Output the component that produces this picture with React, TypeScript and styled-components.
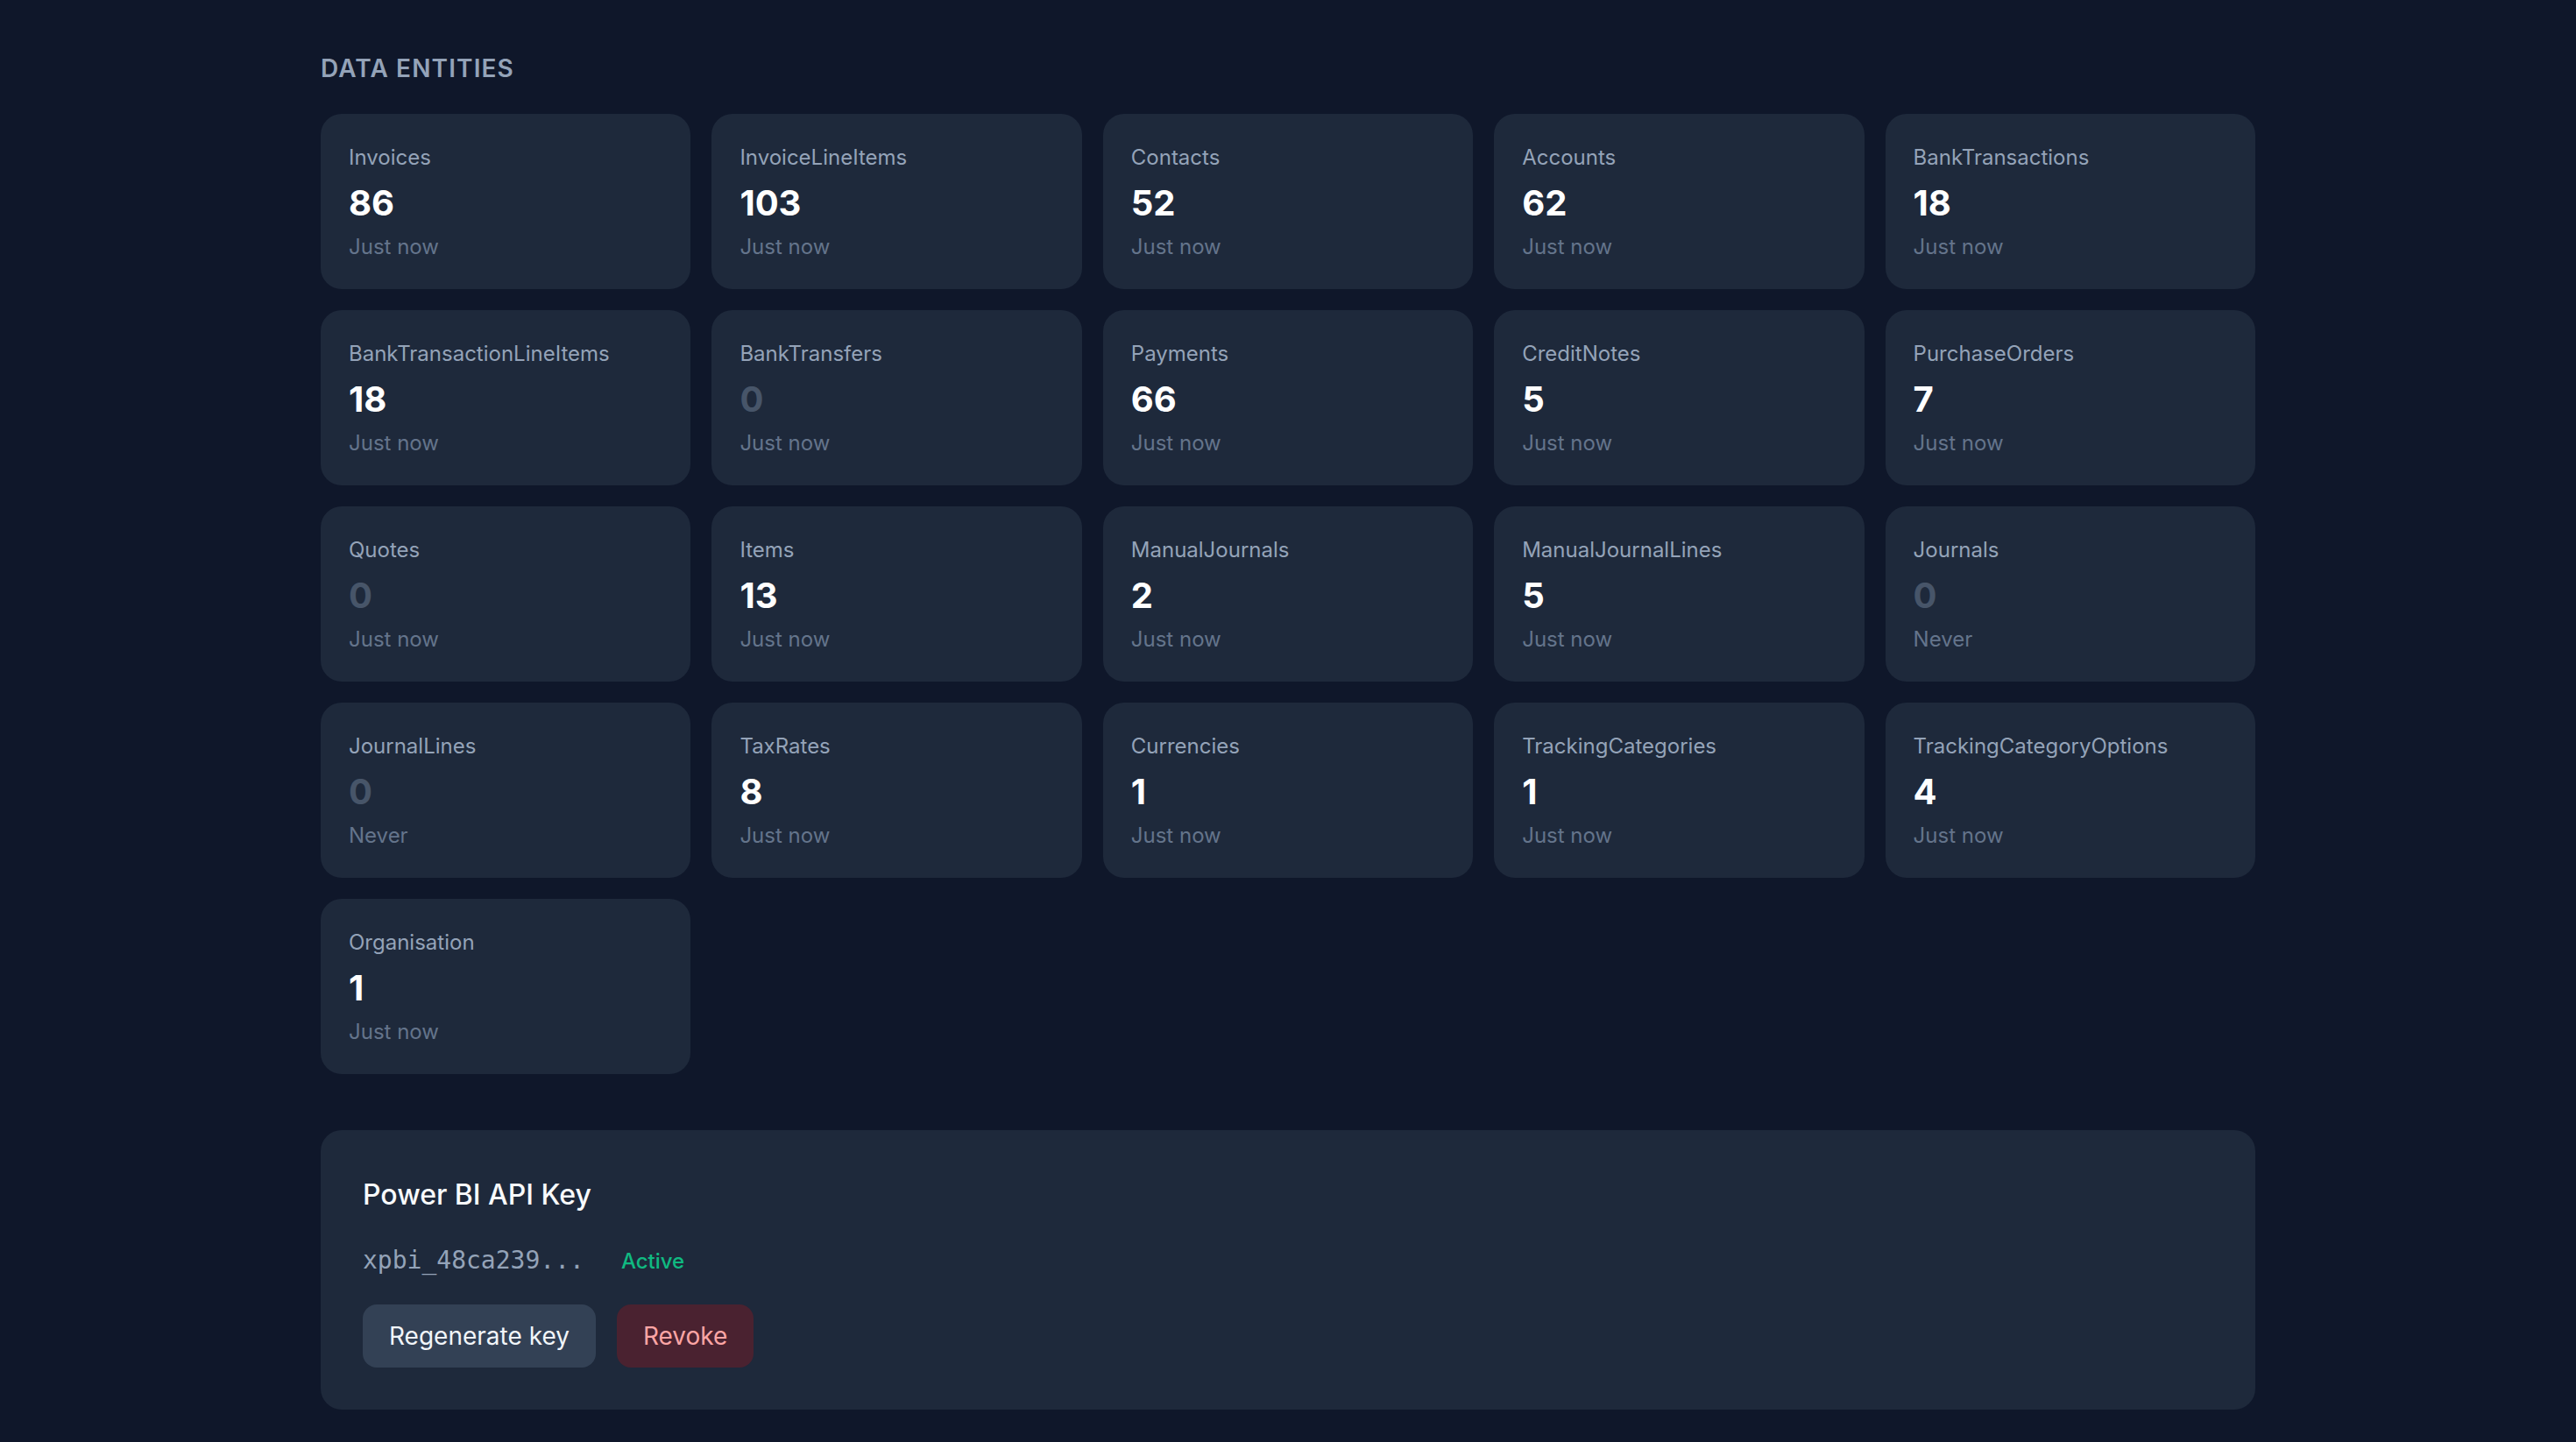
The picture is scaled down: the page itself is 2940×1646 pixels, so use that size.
import styled, { createGlobalStyle } from "styled-components";

const GlobalStyle = createGlobalStyle`
  html, body {
    margin: 0;
    padding: 0;
    background: #0f172a;
  }
  body {
    font-family: "Inter", "Noto Sans", sans-serif;
    color: #f1f5f9;
    -webkit-font-smoothing: antialiased;
  }
`;

interface Entity {
  name: string;
  count: number;
  synced: string;
}

const entities: Entity[] = [
  { name: "Invoices", count: 86, synced: "Just now" },
  { name: "InvoiceLineItems", count: 103, synced: "Just now" },
  { name: "Contacts", count: 52, synced: "Just now" },
  { name: "Accounts", count: 62, synced: "Just now" },
  { name: "BankTransactions", count: 18, synced: "Just now" },
  { name: "BankTransactionLineItems", count: 18, synced: "Just now" },
  { name: "BankTransfers", count: 0, synced: "Just now" },
  { name: "Payments", count: 66, synced: "Just now" },
  { name: "CreditNotes", count: 5, synced: "Just now" },
  { name: "PurchaseOrders", count: 7, synced: "Just now" },
  { name: "Quotes", count: 0, synced: "Just now" },
  { name: "Items", count: 13, synced: "Just now" },
  { name: "ManualJournals", count: 2, synced: "Just now" },
  { name: "ManualJournalLines", count: 5, synced: "Just now" },
  { name: "Journals", count: 0, synced: "Never" },
  { name: "JournalLines", count: 0, synced: "Never" },
  { name: "TaxRates", count: 8, synced: "Just now" },
  { name: "Currencies", count: 1, synced: "Just now" },
  { name: "TrackingCategories", count: 1, synced: "Just now" },
  { name: "TrackingCategoryOptions", count: 4, synced: "Just now" },
  { name: "Organisation", count: 1, synced: "Just now" },
];

const Page = styled.main`
  max-width: 2208px;
  margin: 0 auto;
  padding: 58px 0 40px;
`;

const SectionTitle = styled.h2`
  margin: 0 0 32px;
  font-size: 28px;
  line-height: 40px;
  font-weight: 600;
  letter-spacing: 0.04em;
  text-transform: uppercase;
  color: #94a3b8;
`;

const Grid = styled.div`
  display: grid;
  grid-template-columns: repeat(5, 1fr);
  gap: 24px;
`;

const Card = styled.div`
  background: #1e293b;
  border-radius: 24px;
  padding: 32px;
  height: 200px;
  box-sizing: border-box;
`;

const Label = styled.div`
  font-size: 24px;
  line-height: 36px;
  color: #94a3b8;
`;

const Count = styled.div<{ $empty: boolean }>`
  margin-top: 8px;
  font-size: 40px;
  line-height: 52px;
  font-weight: 700;
  color: ${({ $empty }) => ($empty ? "#475569" : "#ffffff")};
`;

const Synced = styled.div`
  margin-top: 8px;
  font-size: 24px;
  line-height: 32px;
  color: #64748b;
`;

const KeyPanel = styled.section`
  margin-top: 64px;
  background: #1e293b;
  border-radius: 24px;
  padding: 50px 48px 48px;
`;

const PanelTitle = styled.h3`
  margin: 0 0 31px;
  font-size: 32px;
  line-height: 48px;
  font-weight: 500;
  color: #f8fafc;
`;

const KeyRow = styled.div`
  display: flex;
  align-items: baseline;
  gap: 42px;
`;

const KeyValue = styled.code`
  font-family: "DejaVu Sans Mono", "Liberation Mono", monospace;
  font-size: 28px;
  line-height: 40px;
  color: #94a3b8;
`;

const Status = styled.span`
  font-size: 24px;
  line-height: 32px;
  font-weight: 500;
  color: #10b981;
`;

const Actions = styled.div`
  display: flex;
  gap: 24px;
  margin-top: 30px;
`;

const Button = styled.button<{ $danger?: boolean }>`
  height: 72px;
  padding: 0 30px;
  border: none;
  border-radius: 16px;
  font-family: inherit;
  font-size: 28px;
  font-weight: 400;
  cursor: pointer;
  background: ${({ $danger }) => ($danger ? "#4a2230" : "#334155")};
  color: ${({ $danger }) => ($danger ? "#fca5a5" : "#f1f5f9")};
`;

export default function App() {
  return (
    <>
      <GlobalStyle />
      <Page>
        <SectionTitle>Data Entities</SectionTitle>
        <Grid>
          {entities.map((e) => (
            <Card key={e.name}>
              <Label>{e.name}</Label>
              <Count $empty={e.count === 0}>{e.count}</Count>
              <Synced>{e.synced}</Synced>
            </Card>
          ))}
        </Grid>

        <KeyPanel>
          <PanelTitle>Power BI API Key</PanelTitle>
          <KeyRow>
            <KeyValue>xpbi_48ca239...</KeyValue>
            <Status>Active</Status>
          </KeyRow>
          <Actions>
            <Button>Regenerate key</Button>
            <Button $danger>Revoke</Button>
          </Actions>
        </KeyPanel>
      </Page>
    </>
  );
}
